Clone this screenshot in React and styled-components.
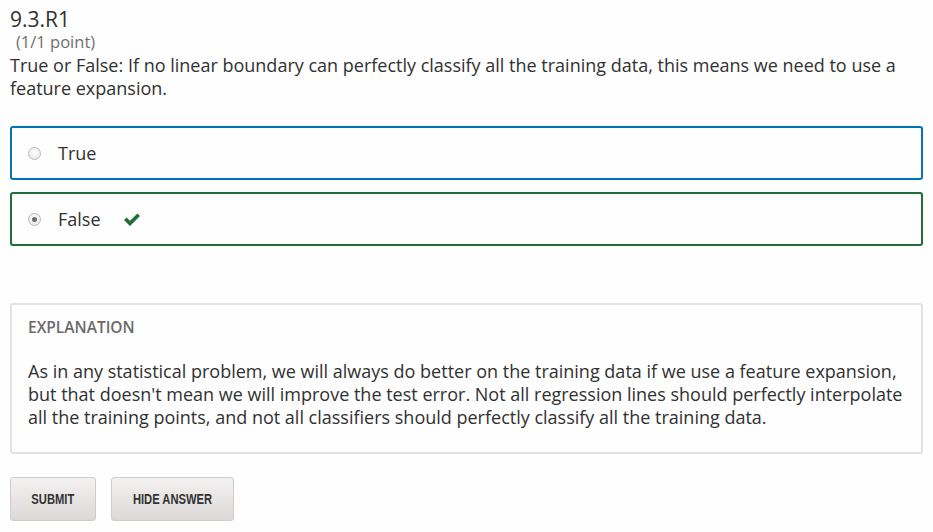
import React, { useState } from "react";
import styled, { createGlobalStyle } from "styled-components";

const GlobalStyle = createGlobalStyle`
  body {
    margin: 0;
    background: #fdfefd;
    font-family: "Open Sans", "Noto Sans", sans-serif;
    color: #313131;
  }
`;

const Page = styled.div`
  padding: 6px 10px 10px 10px;
`;

const Title = styled.h3`
  margin: 0;
  font-size: 21px;
  font-weight: 400;
  line-height: 26px;
  color: #313131;
`;

const Points = styled.div`
  font-size: 16.5px;
  line-height: 20px;
  color: #707070;
  padding-left: 6px;
`;

const Question = styled.p`
  margin: 2px 0 0 0;
  font-size: 18px;
  line-height: 23px;
`;

const Choices = styled.div`
  display: flex;
  flex-direction: column;
  gap: 12px;
  margin-top: 26px;
`;

const Choice = styled.label`
  display: flex;
  align-items: center;
  height: 54px;
  box-sizing: border-box;
  padding: 0 0 0 16px;
  border: 2px solid ${(p) => p.$color};
  border-radius: 3px;
  font-size: 18px;
  cursor: pointer;
`;

const Radio = styled.span`
  width: 13px;
  height: 13px;
  border-radius: 50%;
  border: 1px solid #b9b9b9;
  background: radial-gradient(circle at 50% 40%, #ffffff 0%, #e3e3e3 100%);
  box-sizing: border-box;
  display: flex;
  align-items: center;
  justify-content: center;
  margin-right: 17px;
  &::after {
    content: "";
    width: 5px;
    height: 5px;
    border-radius: 50%;
    background: ${(p) => (p.$checked ? "#6d6d6d" : "transparent")};
  }
`;

const Check = styled.svg`
  margin-left: 22px;
  width: 18px;
  height: 15px;
`;

const Explanation = styled.section`
  margin-top: 57px;
  border: 2px solid #e2e2e2;
  border-radius: 3px;
  padding: 12px 16px 23px 16px;
`;

const ExplainHead = styled.h4`
  margin: 0;
  font-size: 15.5px;
  font-weight: 600;
  line-height: 20px;
  color: #6b6b6b;
  text-transform: uppercase;
`;

const ExplainText = styled.p`
  margin: 23px 0 0 0;
  font-size: 18px;
  line-height: 23px;
`;

const Actions = styled.div`
  display: flex;
  gap: 15px;
  margin-top: 23px;
`;

const Button = styled.button`
  display: flex;
  align-items: center;
  justify-content: center;
  width: ${(p) => p.$w}px;
  height: 44px;
  padding: 0;
  border: 1px solid #d0cccc;
  border-radius: 3px;
  background: linear-gradient(#f3f1f1, #dcd8d8);
  font-family: "Liberation Sans", Arial, sans-serif;
  font-weight: 700;
  font-size: 14px;
  color: #333;
  text-transform: uppercase;
  white-space: nowrap;
`;

const ButtonLabel = styled.span`
  display: inline-block;
  transform: scaleX(0.8);
`;

export default function App() {
  const [answer, setAnswer] = useState("false");
  return (
    <Page>
      <GlobalStyle />
      <Title>9.3.R1</Title>
      <Points>(1/1 point)</Points>
      <Question>
        True or False: If no linear boundary can perfectly classify all the training data, this
        means we need to use a feature expansion.
      </Question>
      <Choices>
        <Choice $color="#0075b4" onClick={() => setAnswer("true")}>
          <Radio $checked={answer === "true"} />
          True
        </Choice>
        <Choice $color="#1f6e3c" onClick={() => setAnswer("false")}>
          <Radio $checked={answer === "false"} />
          False
          <Check viewBox="0 0 18 15">
            <path d="M1 8 L3.6 5.4 L7 8.8 L14.4 1.4 L17 4 L7 14 Z" fill="#1f6e3c" />
          </Check>
        </Choice>
      </Choices>
      <Explanation>
        <ExplainHead>Explanation</ExplainHead>
        <ExplainText>
          As in any statistical problem, we will always do better on the training data if we use a
          feature expansion, but that doesn't mean we will improve the test error. Not all
          regression lines should perfectly interpolate all the training points, and not all
          classifiers should perfectly classify all the training data.
        </ExplainText>
      </Explanation>
      <Actions>
        <Button $w={86}>
          <ButtonLabel>Submit</ButtonLabel>
        </Button>
        <Button $w={123}>
          <ButtonLabel>Hide Answer</ButtonLabel>
        </Button>
      </Actions>
    </Page>
  );
}
